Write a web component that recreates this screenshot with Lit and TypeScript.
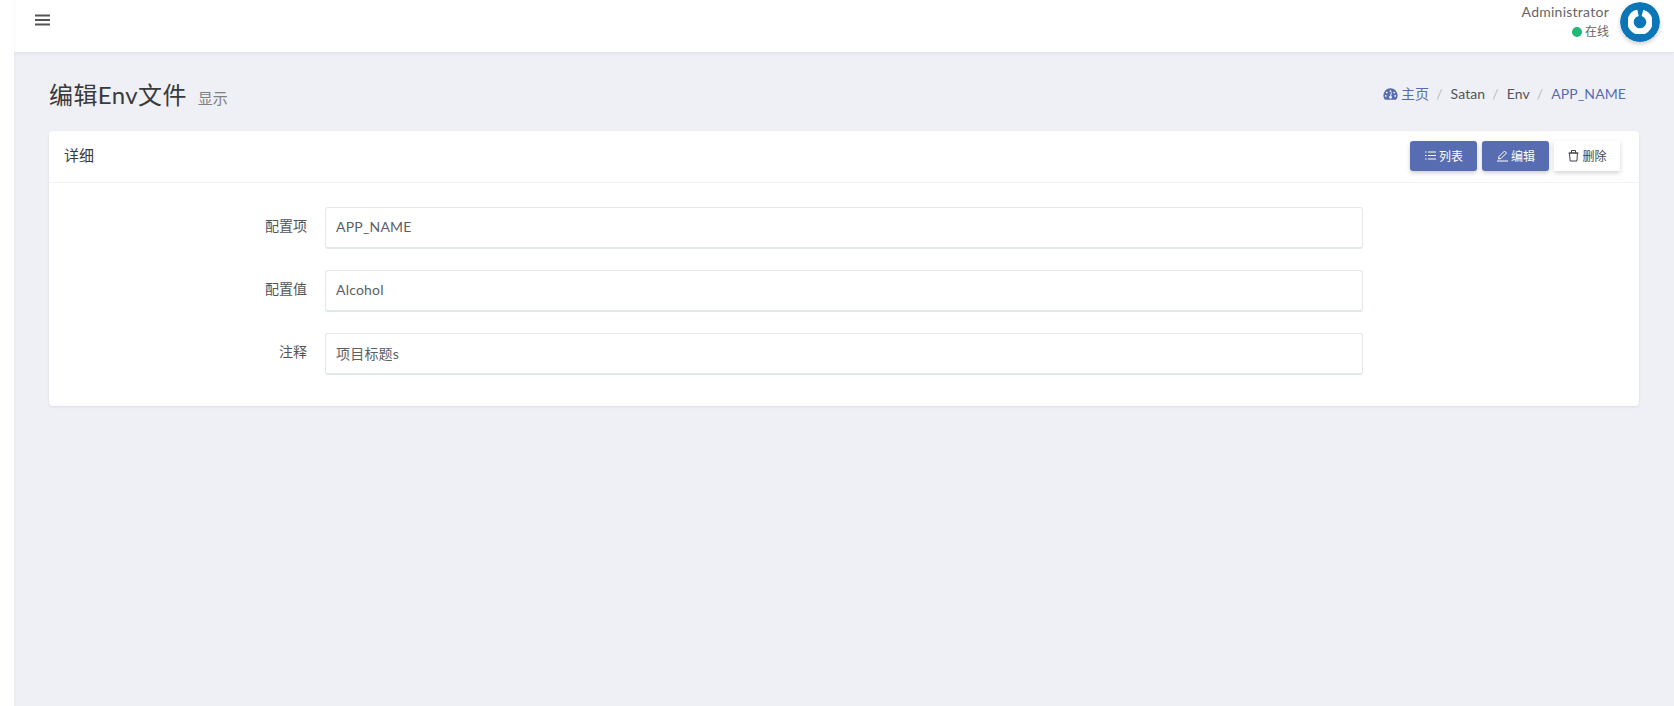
import { LitElement, html, css } from "lit";
import { customElement } from "lit/decorators.js";

@customElement("app-root")
export class AppRoot extends LitElement {
  static styles = css`
    :host { display: block; height: 706px; overflow: hidden; font-family: "Lato", "Noto Sans CJK SC", sans-serif; font-size: 14px; color: #3c4043; background: #eff0f5; }
    .page { display: flex; height: 706px; }
    .rail { width: 14px; flex: none; background: #fff; box-shadow: 0 0 3px rgba(0,0,0,.06); position: relative; z-index: 2; }
    .main { flex: 1; min-width: 0; display: flex; flex-direction: column; }
    .nav { height: 52px; flex: none; background: #fff; box-shadow: 0 1px 4px rgba(0,0,0,.08); display: flex; align-items: flex-start; justify-content: space-between; padding: 0 14px 0 21px; box-sizing: border-box; position: relative; z-index: 1; }
    .burger { margin-top: 14px; width: 15px; height: 12px; display: block; color: #555; }
    .user { display: flex; gap: 11px; margin-top: 2px; }
    .who { text-align: right; color: #666; font-size: 14px; line-height: 18px; padding-top: 1px; }
    .who .name { letter-spacing: .25px; }
    .status { display: flex; align-items: center; justify-content: flex-end; gap: 3px; font-size: 12px; line-height: 20px; margin-top: 1px; }
    .dot { width: 10px; height: 10px; border-radius: 50%; background: #21b978; }
    .avatar { width: 40px; height: 40px; display: block; border-radius: 50%; box-shadow: 0 2px 4px rgba(0,0,0,.2); }
    .content { padding: 0 35px; }
    .head { display: flex; justify-content: space-between; align-items: flex-start; height: 79px; }
    .title { display: flex; align-items: baseline; gap: 11px; margin-top: 26px; }
    .title h1 { margin: 0; font-weight: 400; font-size: 24px; line-height: 34px; color: #3a3a3a; letter-spacing: .4px; }
    .title small { font-size: 15px; color: #808080; }
    .crumbs { display: flex; align-items: center; margin: 32px 13px 0 0; font-size: 14px; line-height: 20px; color: #555; letter-spacing: .1px; }
    .crumbs svg { width: 15px; height: 14px; margin-right: 3px; color: #586cb1; }
    .crumbs .home { color: #586cb1; display: flex; align-items: center; }
    .crumbs .sep { color: #bbb; padding: 0 8px 0 7px; }
    .crumbs .cur { color: #586cb1; }
    .card { background: #fff; border-radius: 4px; box-shadow: 0 1px 3px rgba(0,0,0,.08); height: 275px; box-sizing: border-box; }
    .card-head { display: flex; justify-content: space-between; align-items: center; height: 52px; border-bottom: 1px solid #f2f3f6; padding: 0 19px 0 15px; box-sizing: border-box; }
    .card-title { font-size: 15px; color: #3a3a3a; margin-top: -4px; }
    .btns { display: flex; gap: 5px; margin-top: -2px; }
    .btn { height: 30px; box-sizing: border-box; display: flex; align-items: center; justify-content: center; gap: 2px; width: 67px; font-size: 12px; border-radius: 3px; background: #586cb1; color: #fff; box-shadow: 0 2px 4px rgba(0,0,0,.2); }
    .btn svg { width: 13px; height: 13px; }
    .btn.light { background: #fff; color: #444; border-radius: 1px; width: 66px; box-shadow: 0 2px 5px rgba(0,0,0,.18); }
    .form { display: grid; grid-template-columns: 258px 1038px; column-gap: 18px; row-gap: 21px; padding-top: 24px; }
    .label { text-align: right; font-size: 14px; color: #555; line-height: 20px; padding-top: 9px; }
    .field { height: 42px; box-sizing: border-box; border: 1px solid #e2e8e8; border-bottom-width: 2px; border-radius: 3px; padding: 0 10px 2px; display: flex; align-items: center; font-size: 14px; color: #5b5f66; letter-spacing: .2px; background: #fff; }
  `;

  render() {
    const rows = [["配置项", "APP_NAME"], ["配置值", "Alcohol"], ["注释", "项目标题s"]];
    return html`
      <div class="page">
        <div class="rail"></div>
        <div class="main">
          <div class="nav">
            <svg class="burger" viewBox="0 0 15 12"><path d="M0 1.5h15M0 6h15M0 10.5h15" stroke="currentColor" stroke-width="2"/></svg>
            <div class="user">
              <div class="who">
                <div class="name">Administrator</div>
                <div class="status"><span class="dot"></span>在线</div>
              </div>
              <svg class="avatar" viewBox="0 0 40 40">
                <defs><filter id="soft" x="-10%" y="-10%" width="120%" height="120%"><feGaussianBlur stdDeviation=".45"/></filter></defs>
                <circle cx="20" cy="20" r="20" fill="#0a76b7"/>
                <path d="M22.5 10.83A9.500 9.500 0 1 1 18 10.710" fill="none" stroke="#fff" stroke-width="6.500" filter="url(#soft)"/>
              </svg>
            </div>
          </div>
          <div class="content">
            <div class="head">
              <div class="title"><h1>编辑Env文件</h1><small>显示</small></div>
              <div class="crumbs">
                <span class="home">
                  <svg viewBox="0 0 16 14"><path fill="currentColor" fill-rule="evenodd" d="M8 1a7.500 7.500 0 0 0-6.500 11.300c.2.400.5.700 1 .7h11c.5 0 .8-.3 1-.7A7.500 7.500 0 0 0 8 1ZM8 3a1 1 0 1 1 0 2 1 1 0 0 1 0-2ZM4 4.500a1 1 0 1 1 0 2 1 1 0 0 1 0-2Zm8 0a1 1 0 1 1 0 2 1 1 0 0 1 0-2ZM3 8a1 1 0 1 1 0 2 1 1 0 0 1 0-2Zm10 0a1 1 0 1 1 0 2 1 1 0 0 1 0-2ZM9.500 5.500 8.700 9.200a1.500 1.500 0 1 1-1.200-.1l1-3.800Z"/></svg>
                  主页
                </span>
                <span class="sep">/</span><span>Satan</span>
                <span class="sep">/</span><span>Env</span>
                <span class="sep">/</span><span class="cur">APP_NAME</span>
              </div>
            </div>
            <div class="card">
              <div class="card-head">
                <div class="card-title">详细</div>
                <div class="btns">
                  <div class="btn">
                    <svg viewBox="0 0 13 13"><path d="M4 3h8M4 6.500h8M4 10h8M1 3h1.500M1 6.500h1.500M1 10h1.500" stroke="currentColor" fill="none"/></svg>列表
                  </div>
                  <div class="btn">
                    <svg viewBox="0 0 13 13"><path d="M1 12h11M2.500 10 3 7.500 8.500 2l2 2L5 9.500Z" stroke="currentColor" fill="none"/></svg>编辑
                  </div>
                  <div class="btn light">
                    <svg viewBox="0 0 13 13"><path d="M2.500 4h8l-.6 8H3.100ZM1.500 4h10M4.500 4V1.500h4V4" stroke="currentColor" fill="none"/></svg>删除
                  </div>
                </div>
              </div>
              <div class="form">
                ${rows.map(([l, v]) => html`<div class="label">${l}</div><div class="field">${v}</div>`)}
              </div>
            </div>
          </div>
        </div>
      </div>
    `;
  }
}
